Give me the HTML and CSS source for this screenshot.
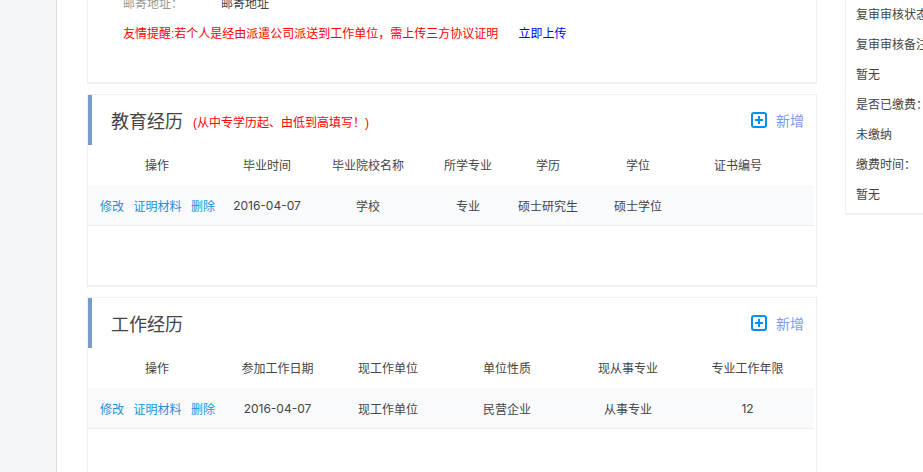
FILE: index.html
```html
<!DOCTYPE html>
<html lang="zh">
<head>
<meta charset="utf-8">
<title>资料</title>
<link rel="stylesheet" href="styles.css">
</head>
<body>
<div class="page">
  <nav class="nav"></nav>
  <main class="main">
    <section class="card card-top">
      <div class="addr"><span class="addr-label">邮寄地址<span class="punct">：</span></span><span class="addr-value">邮寄地址</span></div>
      <div class="notice"><span class="notice-text">友情提醒:若个人是经由派遣公司派送到工作单位<span class="punct">，</span>需上传三方协议证明</span><a class="upload">立即上传</a></div>
    </section>
    <section class="card card-edu">
      <header class="head">
        <h2 class="title">教育经历</h2><span class="hint">(从中专学历起、由低到高填写<span class="punct">！</span>)</span>
        <a class="add"><svg class="add-icon" width="16" height="16" viewBox="0 0 16 16"><rect x="1" y="1" width="14" height="14" rx="2" fill="none" stroke="#0090f5" stroke-width="2"/><path d="M4 8h8M8 4v8" stroke="#0090f5" stroke-width="2"/></svg><span>新增</span></a>
      </header>
      <div class="grid grid-edu row-head">
        <div>操作</div><div>毕业时间</div><div>毕业院校名称</div><div>所学专业</div><div>学历</div><div>学位</div><div>证书编号</div>
      </div>
      <div class="grid grid-edu row-body">
        <div class="ops"><a>修改</a><a>证明材料</a><a>删除</a></div><div class="num">2016-04-07</div><div>学校</div><div>专业</div><div>硕士研究生</div><div>硕士学位</div><div></div>
      </div>
    </section>
    <section class="card card-work">
      <header class="head">
        <h2 class="title">工作经历</h2>
        <a class="add"><svg class="add-icon" width="16" height="16" viewBox="0 0 16 16"><rect x="1" y="1" width="14" height="14" rx="2" fill="none" stroke="#0090f5" stroke-width="2"/><path d="M4 8h8M8 4v8" stroke="#0090f5" stroke-width="2"/></svg><span>新增</span></a>
      </header>
      <div class="grid grid-work row-head">
        <div>操作</div><div>参加工作日期</div><div>现工作单位</div><div>单位性质</div><div>现从事专业</div><div>专业工作年限</div>
      </div>
      <div class="grid grid-work row-body">
        <div class="ops"><a>修改</a><a>证明材料</a><a>删除</a></div><div class="num">2016-04-07</div><div>现工作单位</div><div>民营企业</div><div>从事专业</div><div class="num">12</div>
      </div>
    </section>
  </main>
  <aside class="side">
    <p>复审审核状态<span class="punct">：</span></p>
    <p>复审审核备注<span class="punct">：</span></p>
    <p>暂无</p>
    <p>是否已缴费<span class="punct">：</span></p>
    <p>未缴纳</p>
    <p>缴费时间<span class="punct">：</span></p>
    <p>暂无</p>
  </aside>
</div>
</body>
</html>
```
FILE: styles.css
```css
* { box-sizing: border-box; }
html, body { margin: 0; height: 472px; overflow: hidden; background: #fff; }
body { font-family: "Liberation Sans", "Noto Sans CJK SC", sans-serif; font-size: 12px; color: #444; }
.page { display: flex; align-items: flex-start; height: 472px; overflow: hidden; }
.nav { width: 57px; height: 472px; flex: none; background: #f5f6f8; border-right: 1px solid #ddd; }
.main { width: 730px; flex: none; margin-left: 30px; display: flex; flex-direction: column; gap: 10px; }
.card { border: 2px solid #f0f0f2; border-width: 1px 1px 2px 1px; background: #fff; }
.card-top { height: 84px; border-top: 0; padding-left: 35px; }
.addr { margin-top: -4px; height: 20px; line-height: 16px; display: flex; }
.addr-label { width: 98px; color: #999; }
.addr-value { color: #444; }
.notice { margin-top: 8px; line-height: 20px; color: #f00; white-space: nowrap; }
.notice-text { margin-right: 20px; }
.punct { font-family: "Noto Sans CJK TC", sans-serif; line-height: 0; }
.upload { color: #00f; text-decoration: none; }
.card-edu { height: 193px; }
.card-work { height: 200px; }
.head { height: 50px; border-left: 4px solid #7a9aca; display: flex; align-items: center; padding-left: 19px; padding-right: 12px; }
.title { margin: -1px 0 0; font-size: 18px; font-weight: 400; color: #444; }
.hint { margin-left: 10px; color: #f00; margin-top: 2px; }
.add { margin-left: auto; display: flex; align-items: center; gap: 9px; color: #7a9cf0; font-size: 14px; }
.grid { display: grid; margin-right: 2px; text-align: center; }
.grid-edu { grid-template-columns: 138px 82px 120px 80px 80px 100px 100px 1fr; }
.grid-work { grid-template-columns: 138px 103px 118px 120px 122px 117px 1fr; }
.row-head { height: 40px; align-items: center; padding-bottom: 1px; }
.row-body { height: 41px; align-items: center; background: #f9fafc; border-bottom: 1px solid #eee; }
.num { font-family: "Inter", "Liberation Sans", sans-serif; }
.ops { display: flex; gap: 9.5px; padding-left: 12px; white-space: nowrap; }
.ops a { color: #1e8fd8; }
.side { width: 100px; flex: none; margin-left: 28px; height: 215px; border: 1px solid #f0f0f2; border-top: 0; border-bottom-width: 2px; padding-left: 10px; white-space: nowrap; }
.side p { margin: 0; height: 30px; line-height: 30px; }
```
